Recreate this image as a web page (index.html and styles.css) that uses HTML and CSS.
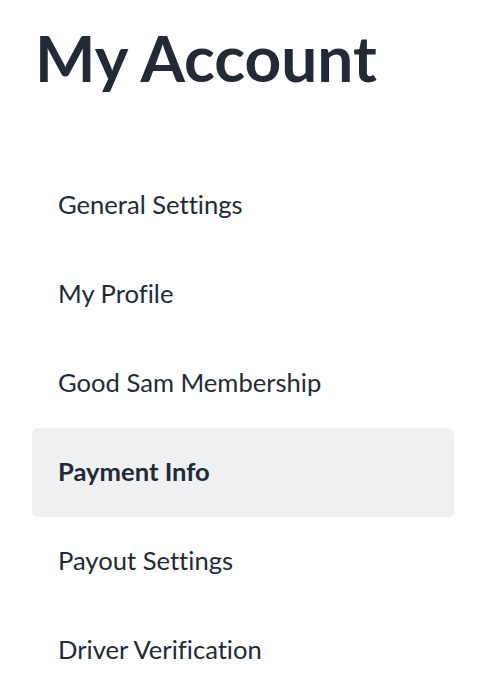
FILE: index.html
```html
<!DOCTYPE html>
<html lang="en">
<head>
<meta charset="utf-8">
<title>My Account</title>
<link rel="stylesheet" href="styles.css">
</head>
<body>
<main class="account">
  <h1 class="account-title">My Account</h1>
  <nav class="account-nav">
    <a class="nav-item" href="#">General Settings</a>
    <a class="nav-item" href="#">My Profile</a>
    <a class="nav-item" href="#">Good Sam Membership</a>
    <a class="nav-item is-active" href="#">Payment Info</a>
    <a class="nav-item" href="#">Payout Settings</a>
    <a class="nav-item" href="#">Driver Verification</a>
  </nav>
</main>
</body>
</html>
```

FILE: styles.css
```css
html, body {
  margin: 0;
  padding: 0;
  background: #ffffff;
}

body {
  font-family: Lato, "Noto Sans", sans-serif;
  color: #232a35;
  font-variant-ligatures: none;
}

.account {
  padding: 0 24px 0 32px;
}

.account-title {
  margin: 0;
  padding: 20px 0 0 3px;
  font-size: 64px;
  line-height: 76px;
  font-weight: 700;
  letter-spacing: 0;
  height: 161px;
  box-sizing: border-box;
}

.account-nav {
  display: flex;
  flex-direction: column;
}

.nav-item {
  display: block;
  height: 89px;
  box-sizing: border-box;
  padding: 28px 26px 30px 26px;
  font-size: 25.6px;
  line-height: 31px;
  color: #232a35;
  text-decoration: none;
  border-radius: 6px;
}

.nav-item.is-active {
  background: #eff0f2;
  font-weight: 700;
}
```
